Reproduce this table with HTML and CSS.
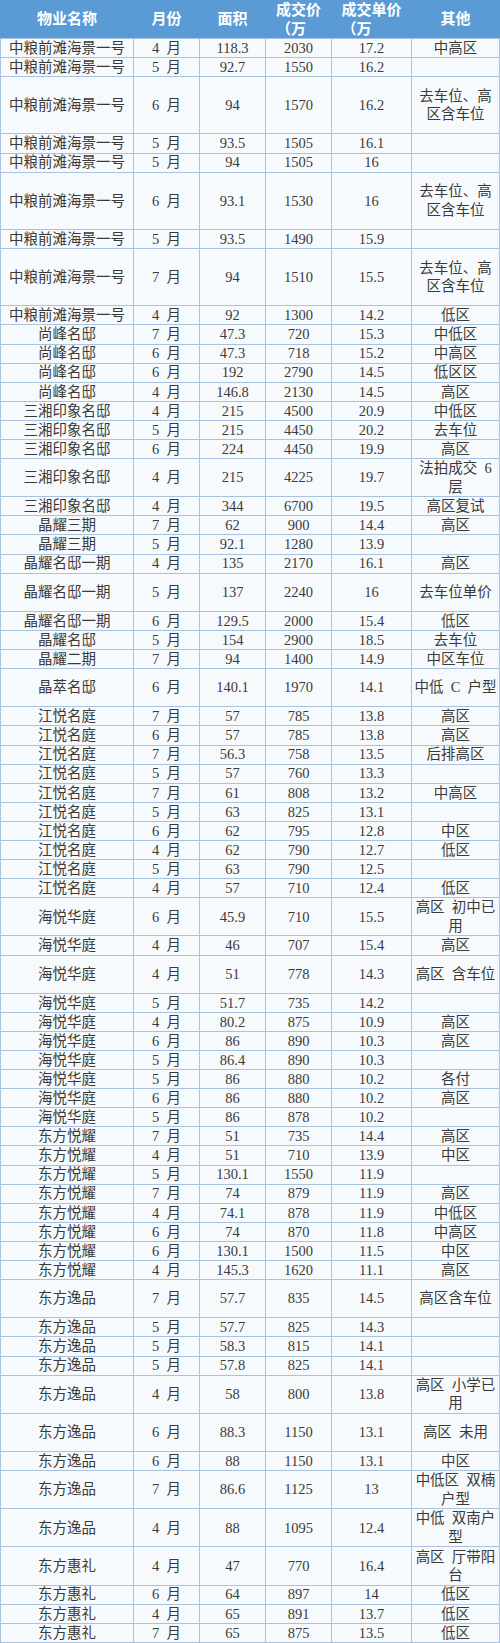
FILE: index.html
```html
<!DOCTYPE html>
<html lang="zh-CN">
<head>
<meta charset="utf-8">
<title>成交记录</title>
<link rel="stylesheet" href="styles.css">
</head>
<body>
<div class="sheet">
  <div class="row head">
    <div>物业名称</div>
    <div>月份</div>
    <div>面积</div>
    <div><span class="hl">成交价<br>（万</span></div>
    <div><span class="hl">成交单价<br>（万</span></div>
    <div>其他</div>
  </div>
  <div class="row s"><div>中粮前滩海景一号</div><div>4 月</div><div>118.3</div><div>2030</div><div>17.2</div><div>中高区</div></div>
  <div class="row s"><div>中粮前滩海景一号</div><div>5 月</div><div>92.7</div><div>1550</div><div>16.2</div><div></div></div>
  <div class="row t"><div>中粮前滩海景一号</div><div>6 月</div><div>94</div><div>1570</div><div>16.2</div><div>去车位、高区含车位</div></div>
  <div class="row s"><div>中粮前滩海景一号</div><div>5 月</div><div>93.5</div><div>1505</div><div>16.1</div><div></div></div>
  <div class="row s"><div>中粮前滩海景一号</div><div>5 月</div><div>94</div><div>1505</div><div>16</div><div></div></div>
  <div class="row t"><div>中粮前滩海景一号</div><div>6 月</div><div>93.1</div><div>1530</div><div>16</div><div>去车位、高区含车位</div></div>
  <div class="row s"><div>中粮前滩海景一号</div><div>5 月</div><div>93.5</div><div>1490</div><div>15.9</div><div></div></div>
  <div class="row t"><div>中粮前滩海景一号</div><div>7 月</div><div>94</div><div>1510</div><div>15.5</div><div>去车位、高区含车位</div></div>
  <div class="row s"><div>中粮前滩海景一号</div><div>4 月</div><div>92</div><div>1300</div><div>14.2</div><div>低区</div></div>
  <div class="row s"><div>尚峰名邸</div><div>7 月</div><div>47.3</div><div>720</div><div>15.3</div><div>中低区</div></div>
  <div class="row s"><div>尚峰名邸</div><div>6 月</div><div>47.3</div><div>718</div><div>15.2</div><div>中高区</div></div>
  <div class="row s"><div>尚峰名邸</div><div>6 月</div><div>192</div><div>2790</div><div>14.5</div><div>低区区</div></div>
  <div class="row s"><div>尚峰名邸</div><div>4 月</div><div>146.8</div><div>2130</div><div>14.5</div><div>高区</div></div>
  <div class="row s"><div>三湘印象名邸</div><div>4 月</div><div>215</div><div>4500</div><div>20.9</div><div>中低区</div></div>
  <div class="row s"><div>三湘印象名邸</div><div>5 月</div><div>215</div><div>4450</div><div>20.2</div><div>去车位</div></div>
  <div class="row s"><div>三湘印象名邸</div><div>6 月</div><div>224</div><div>4450</div><div>19.9</div><div>高区</div></div>
  <div class="row d"><div>三湘印象名邸</div><div>4 月</div><div>215</div><div>4225</div><div>19.7</div><div>法拍成交 6 层</div></div>
  <div class="row s"><div>三湘印象名邸</div><div>4 月</div><div>344</div><div>6700</div><div>19.5</div><div>高区复试</div></div>
  <div class="row s"><div>晶耀三期</div><div>7 月</div><div>62</div><div>900</div><div>14.4</div><div>高区</div></div>
  <div class="row s"><div>晶耀三期</div><div>5 月</div><div>92.1</div><div>1280</div><div>13.9</div><div></div></div>
  <div class="row s"><div>晶耀名邸一期</div><div>4 月</div><div>135</div><div>2170</div><div>16.1</div><div>高区</div></div>
  <div class="row d"><div>晶耀名邸一期</div><div>5 月</div><div>137</div><div>2240</div><div>16</div><div>去车位单价</div></div>
  <div class="row s"><div>晶耀名邸一期</div><div>6 月</div><div>129.5</div><div>2000</div><div>15.4</div><div>低区</div></div>
  <div class="row s"><div>晶耀名邸</div><div>5 月</div><div>154</div><div>2900</div><div>18.5</div><div>去车位</div></div>
  <div class="row s"><div>晶耀二期</div><div>7 月</div><div>94</div><div>1400</div><div>14.9</div><div>中区车位</div></div>
  <div class="row d"><div>晶萃名邸</div><div>6 月</div><div>140.1</div><div>1970</div><div>14.1</div><div>中低 C 户型</div></div>
  <div class="row s"><div>江悦名庭</div><div>7 月</div><div>57</div><div>785</div><div>13.8</div><div>高区</div></div>
  <div class="row s"><div>江悦名庭</div><div>6 月</div><div>57</div><div>785</div><div>13.8</div><div>高区</div></div>
  <div class="row s"><div>江悦名庭</div><div>7 月</div><div>56.3</div><div>758</div><div>13.5</div><div>后排高区</div></div>
  <div class="row s"><div>江悦名庭</div><div>5 月</div><div>57</div><div>760</div><div>13.3</div><div></div></div>
  <div class="row s"><div>江悦名庭</div><div>7 月</div><div>61</div><div>808</div><div>13.2</div><div>中高区</div></div>
  <div class="row s"><div>江悦名庭</div><div>5 月</div><div>63</div><div>825</div><div>13.1</div><div></div></div>
  <div class="row s"><div>江悦名庭</div><div>6 月</div><div>62</div><div>795</div><div>12.8</div><div>中区</div></div>
  <div class="row s"><div>江悦名庭</div><div>4 月</div><div>62</div><div>790</div><div>12.7</div><div>低区</div></div>
  <div class="row s"><div>江悦名庭</div><div>5 月</div><div>63</div><div>790</div><div>12.5</div><div></div></div>
  <div class="row s"><div>江悦名庭</div><div>4 月</div><div>57</div><div>710</div><div>12.4</div><div>低区</div></div>
  <div class="row d"><div>海悦华庭</div><div>6 月</div><div>45.9</div><div>710</div><div>15.5</div><div>高区 初中已用</div></div>
  <div class="row s"><div>海悦华庭</div><div>4 月</div><div>46</div><div>707</div><div>15.4</div><div>高区</div></div>
  <div class="row d"><div>海悦华庭</div><div>4 月</div><div>51</div><div>778</div><div>14.3</div><div>高区 含车位</div></div>
  <div class="row s"><div>海悦华庭</div><div>5 月</div><div>51.7</div><div>735</div><div>14.2</div><div></div></div>
  <div class="row s"><div>海悦华庭</div><div>4 月</div><div>80.2</div><div>875</div><div>10.9</div><div>高区</div></div>
  <div class="row s"><div>海悦华庭</div><div>6 月</div><div>86</div><div>890</div><div>10.3</div><div>高区</div></div>
  <div class="row s"><div>海悦华庭</div><div>5 月</div><div>86.4</div><div>890</div><div>10.3</div><div></div></div>
  <div class="row s"><div>海悦华庭</div><div>5 月</div><div>86</div><div>880</div><div>10.2</div><div>各付</div></div>
  <div class="row s"><div>海悦华庭</div><div>6 月</div><div>86</div><div>880</div><div>10.2</div><div>高区</div></div>
  <div class="row s"><div>海悦华庭</div><div>5 月</div><div>86</div><div>878</div><div>10.2</div><div></div></div>
  <div class="row s"><div>东方悦耀</div><div>7 月</div><div>51</div><div>735</div><div>14.4</div><div>高区</div></div>
  <div class="row s"><div>东方悦耀</div><div>4 月</div><div>51</div><div>710</div><div>13.9</div><div>中区</div></div>
  <div class="row s"><div>东方悦耀</div><div>5 月</div><div>130.1</div><div>1550</div><div>11.9</div><div></div></div>
  <div class="row s"><div>东方悦耀</div><div>7 月</div><div>74</div><div>879</div><div>11.9</div><div>高区</div></div>
  <div class="row s"><div>东方悦耀</div><div>4 月</div><div>74.1</div><div>878</div><div>11.9</div><div>中低区</div></div>
  <div class="row s"><div>东方悦耀</div><div>6 月</div><div>74</div><div>870</div><div>11.8</div><div>中高区</div></div>
  <div class="row s"><div>东方悦耀</div><div>6 月</div><div>130.1</div><div>1500</div><div>11.5</div><div>中区</div></div>
  <div class="row s"><div>东方悦耀</div><div>4 月</div><div>145.3</div><div>1620</div><div>11.1</div><div>高区</div></div>
  <div class="row d"><div>东方逸品</div><div>7 月</div><div>57.7</div><div>835</div><div>14.5</div><div>高区含车位</div></div>
  <div class="row s"><div>东方逸品</div><div>5 月</div><div>57.7</div><div>825</div><div>14.3</div><div></div></div>
  <div class="row s"><div>东方逸品</div><div>5 月</div><div>58.3</div><div>815</div><div>14.1</div><div></div></div>
  <div class="row s"><div>东方逸品</div><div>5 月</div><div>57.8</div><div>825</div><div>14.1</div><div></div></div>
  <div class="row d"><div>东方逸品</div><div>4 月</div><div>58</div><div>800</div><div>13.8</div><div>高区 小学已用</div></div>
  <div class="row d"><div>东方逸品</div><div>6 月</div><div>88.3</div><div>1150</div><div>13.1</div><div>高区 未用</div></div>
  <div class="row s"><div>东方逸品</div><div>6 月</div><div>88</div><div>1150</div><div>13.1</div><div>中区</div></div>
  <div class="row d"><div>东方逸品</div><div>7 月</div><div>86.6</div><div>1125</div><div>13</div><div>中低区 双楠户型</div></div>
  <div class="row d"><div>东方逸品</div><div>4 月</div><div>88</div><div>1095</div><div>12.4</div><div>中低 双南户型</div></div>
  <div class="row d"><div>东方惠礼</div><div>4 月</div><div>47</div><div>770</div><div>16.4</div><div>高区 厅带阳台</div></div>
  <div class="row s"><div>东方惠礼</div><div>6 月</div><div>64</div><div>897</div><div>14</div><div>低区</div></div>
  <div class="row s"><div>东方惠礼</div><div>4 月</div><div>65</div><div>891</div><div>13.7</div><div>低区</div></div>
  <div class="row s"><div>东方惠礼</div><div>7 月</div><div>65</div><div>875</div><div>13.5</div><div>低区</div></div>
</div>
</body>
</html>
```
FILE: styles.css
```css
html, body {
  margin: 0;
  padding: 0;
  background: #ffffff;
}

.sheet {
  width: 500px;
  display: flex;
  flex-direction: column;
  gap: 1px;
  padding-bottom: 1px;
  background: #a9c3de;
  font-family: "Liberation Serif", "Noto Sans CJK SC", serif;
  font-size: 14.5px;
  color: #3a3a3a;
  word-spacing: 3.6px;
}

.row {
  display: grid;
  grid-template-columns: 132px 65px 65px 65px 79px 87px;
  column-gap: 1px;
  padding: 0 1px;
}

.row > div {
  background: #f7fafd;
  display: flex;
  align-items: center;
  justify-content: center;
  text-align: center;
  line-height: 18.5px;
  overflow: hidden;
}

.row > div:last-child {
  padding: 0 1.5px;
}

.s { height: 18.1px; }
.d { height: 37.2px; }
.t { height: 56.3px; }

.head {
  height: 38px;
  background: #5b9bd5;
}

.head > div {
  background: transparent;
  color: #ffffff;
  font-weight: bold;
  font-size: 15px;
  line-height: 19px;
  padding-top: 1px;
}

.hl {
  display: inline-block;
  text-align: left;
}
```
